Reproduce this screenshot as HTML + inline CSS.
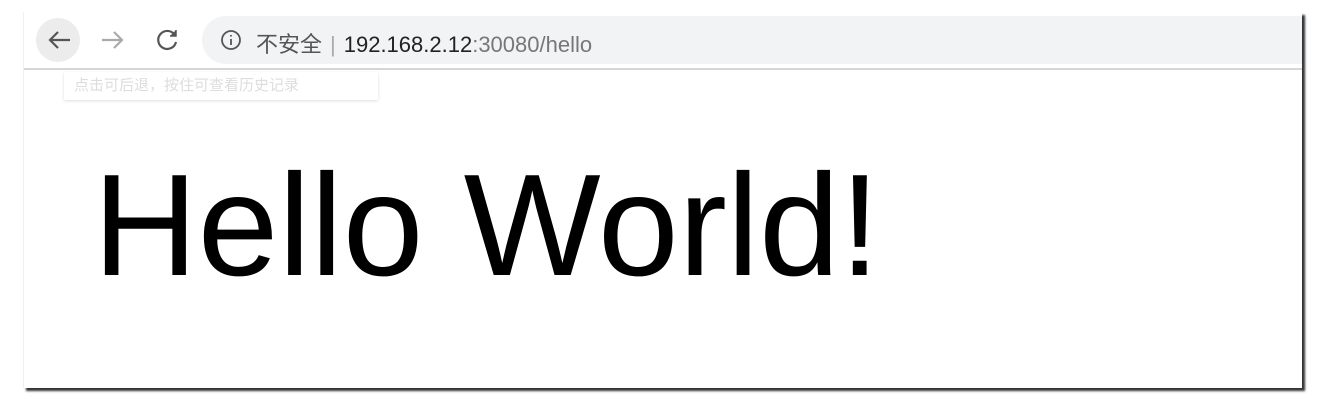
<!DOCTYPE html>
<html><head><meta charset="utf-8"><style>
body{margin:0;width:1320px;height:404px;background:#fff;position:relative;overflow:hidden;font-family:"Liberation Sans","Noto Sans CJK SC",sans-serif}
.win{position:absolute;left:23px;top:12px;width:1278px;height:376px;background:#fff;box-shadow:3px 3px 2px #333;border-left:1px solid #f0f0f0}
.bar{position:absolute;left:0;top:0;width:100%;height:56px;background:#fff;border-bottom:2px solid #d6d6d6}
.pill{position:absolute;left:178px;top:4px;right:0;height:48px;background:#f1f3f4;border-radius:24px 0 0 24px}
.back{position:absolute;left:12px;top:6px;width:44px;height:44px;border-radius:22px;background:#ececec}
.url{position:absolute;left:232px;top:15px;font-size:22px;color:#222;white-space:nowrap}
.tip{position:absolute;left:40px;top:60px;width:314px;height:28px;background:#fff;box-shadow:0 1px 3px #ddd;font-size:15px;color:#ddd;line-height:28px;padding-left:10px;box-sizing:border-box}
.h{position:absolute;left:69px;top:141px;font-size:145px;color:#000;white-space:nowrap;line-height:1}
</style></head><body>
<div class="win">
<div class="bar">
<div class="back"></div>
<div class="pill"></div>
<svg style="position:absolute;left:0;top:0" width="200" height="56" fill="none" stroke="#555" stroke-width="2.2">
<path d="M46 28H26M34 20l-8 8 8 8"/>
<path d="M78 28h20M90 20l8 8-8 8" stroke="#aaa"/>
<path d="M150 22a9 9 0 1 0 2 8" /><path d="M152 18v6h-6" fill="#555" stroke-width="1.5"/>
</svg>
<svg style="position:absolute;left:196px;top:17px" width="24" height="24" fill="none" stroke="#555" stroke-width="1.8"><circle cx="11" cy="11" r="9"/><path d="M11 10v6M11 6v1.5"/></svg>
<div class="url"><span style="color:#555">不安全</span><span style="color:#aaa;margin:0 8px">|</span>192.168.2.12<span style="color:#777">:30080/hello</span></div>
</div>
<div class="tip">点击可后退，按住可查看历史记录</div>
<div class="h">Hello World!</div>
</div>
</body></html>
